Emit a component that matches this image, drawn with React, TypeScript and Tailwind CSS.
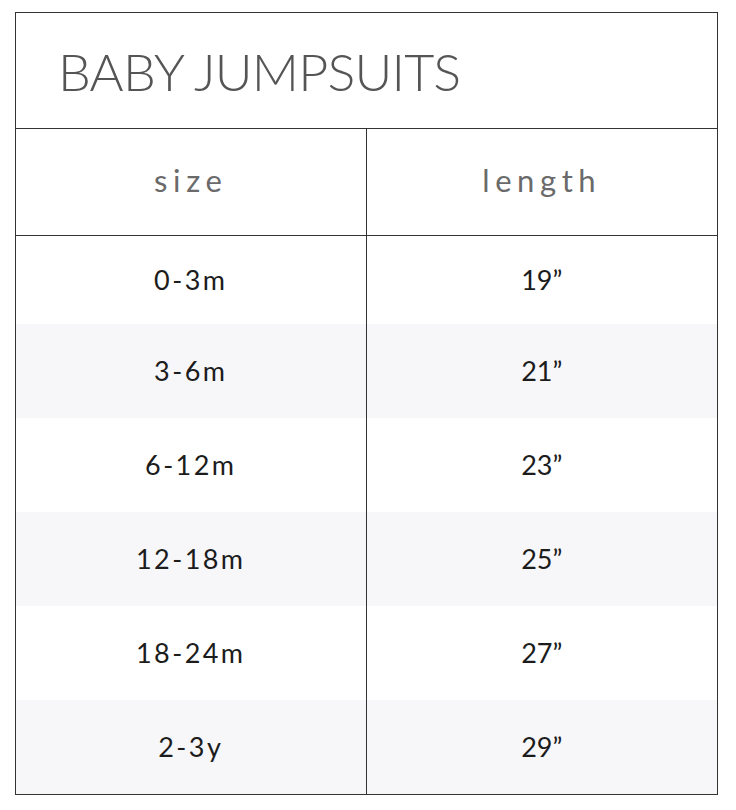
const rows = [
  { size: "0-3m", length: "19”" },
  { size: "3-6m", length: "21”" },
  { size: "6-12m", length: "23”" },
  { size: "12-18m", length: "25”" },
  { size: "18-24m", length: "27”" },
  { size: "2-3y", length: "29”" },
];

export default function App() {
  return (
    <div className="min-h-[810px] bg-white pl-[15px] pt-[12px] font-['Lato',sans-serif]">
      <div className="w-[703px] border-[1.5px] border-[#333]">
        {/* title */}
        <div className="flex h-[116px] items-center border-b-[1.5px] border-[#333] pl-[42px]">
          <h1 className="text-[52px] font-light leading-none tracking-[-0.015em] text-[#555]">
            BABY JUMPSUITS
          </h1>
        </div>

        {/* header */}
        <div className="grid h-[107px] grid-cols-2 border-b-[1.5px] border-[#333]">
          <div className="flex items-center justify-center border-r-[1.5px] border-[#333] pb-[3px] text-[31px] tracking-[0.18em] text-[#6a6a6a]">
            size
          </div>
          <div className="flex items-center justify-center pb-[3px] text-[31px] tracking-[0.18em] text-[#6a6a6a]">
            length
          </div>
        </div>

        {rows.map((r, i) => (
          <div
            key={r.size}
            className={`grid grid-cols-2 text-[27px] text-[#1c1c1c] ${i === 0 ? "h-[88px]" : "h-[94px]"} ${i % 2 === 1 ? "bg-[#f7f7f9]" : "bg-white"}`}
          >
            <div className="flex items-center justify-center border-r-[1.5px] border-[#333] tracking-[0.09em]">
              {r.size}
            </div>
            <div className="flex items-center justify-center">{r.length}</div>
          </div>
        ))}
      </div>
    </div>
  );
}
